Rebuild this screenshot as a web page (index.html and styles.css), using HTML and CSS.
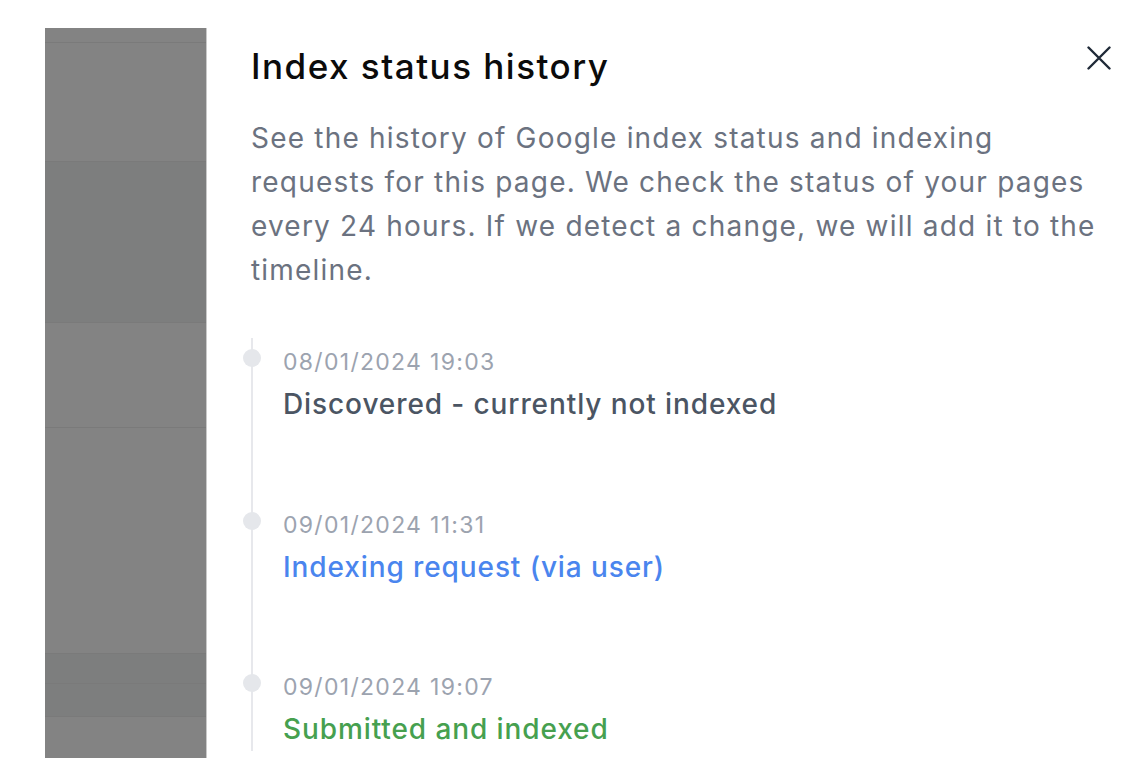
FILE: index.html
```html
<!DOCTYPE html>
<html lang="en">
<head>
<meta charset="utf-8">
<title>Index status history</title>
<link rel="stylesheet" href="styles.css">
</head>
<body>
<div class="screen">
  <div class="backdrop">
    <div class="row r1"></div>
    <div class="row r2"></div>
    <div class="row r3 dark"></div>
    <div class="row r4"></div>
    <div class="row r5"></div>
    <div class="row r6 dark"></div>
    <div class="row r7 dark"></div>
    <div class="row r8"></div>
  </div>
  <div class="panel">
    <div class="head">
      <h1 class="title">Index status history</h1>
      <button class="close" aria-label="Close">
        <svg width="24" height="24" viewBox="0 0 24 24"><path d="M1.5 1.5 L22.5 22.5 M22.5 1.5 L1.5 22.5" stroke="#1f2937" stroke-width="2.4" stroke-linecap="round" fill="none"/></svg>
      </button>
    </div>
    <p class="desc">See the history of Google index status and indexing requests for this page. We check the status of your pages every 24 hours. If we detect a change, we will add it to the timeline.</p>
    <ul class="timeline">
      <li class="item">
        <span class="dot"></span>
        <div class="date">08/01/2024 19:03</div>
        <div class="status neutral">Discovered - currently not indexed</div>
      </li>
      <li class="item">
        <span class="dot"></span>
        <div class="date">09/01/2024 11:31</div>
        <div class="status blue">Indexing request (via user)</div>
      </li>
      <li class="item last">
        <span class="dot"></span>
        <div class="date">09/01/2024 19:07</div>
        <div class="status green">Submitted and indexed</div>
      </li>
    </ul>
  </div>
</div>
</body>
</html>
```
FILE: styles.css
```css
html, body {
  margin: 0;
  padding: 0;
  background: #ffffff;
}
body {
  font-family: "Inter", "Liberation Sans", sans-serif;
}
.screen {
  display: flex;
  width: 1148px;
  height: 772px;
  overflow: hidden;
}
.backdrop {
  margin: 28px 0 0 45px;
  width: 161px;
  height: 730px;
  display: flex;
  flex-direction: column;
  border-right: 1px solid #c9c9c9;
  background: #838383;
}
.row { border-bottom: 1px solid #7a7a7a; background: #838383; }
.row.dark { background: #7d7e7e; }
.r1 { height: 14px; }
.r2 { height: 118px; }
.r3 { height: 160px; }
.r4 { height: 104px; }
.r5 { height: 225px; }
.r6 { height: 29px; }
.r7 { height: 32px; }
.r8 { flex: 1; border-bottom: none; }

.panel {
  flex: 1;
  padding: 0 0 0 44px;
  display: flex;
  flex-direction: column;
}
.head {
  display: flex;
  justify-content: space-between;
  align-items: flex-start;
  padding-top: 44px;
}
.title {
  margin: 0;
  font-size: 35px;
  line-height: 44px;
  font-weight: 500;
  color: #0b0b0b;
  letter-spacing: 1.5px;
}
.close {
  margin: 2px 37px 0 0;
  padding: 0;
  border: none;
  background: none;
  width: 24px;
  height: 24px;
  display: flex;
}
.desc {
  margin: 28px 0 0 0;
  width: 850px;
  font-size: 28px;
  line-height: 44px;
  color: #6b7280;
  letter-spacing: 1.2px;
}
.timeline {
  list-style: none;
  margin: 46px 0 0 0;
  padding: 0;
  border-left: 2px solid #e7e8ec;
  width: 700px;
}
.item {
  position: relative;
  padding: 8px 0 74.5px 30px;
}
.item.last { padding-bottom: 0; }
.dot {
  position: absolute;
  left: -10px;
  top: 11px;
  width: 18px;
  height: 18px;
  border-radius: 50%;
  background: #e5e7eb;
}
.date {
  font-size: 23px;
  line-height: 32px;
  color: #9ca3af;
  letter-spacing: 1.3px;
}
.status {
  margin-top: 4px;
  font-size: 28px;
  line-height: 44px;
  font-weight: 500;
  letter-spacing: 0.9px;
}
.neutral { color: #4b5563; }
.blue { color: #4a85ee; }
.green { color: #46a04f; }
```
